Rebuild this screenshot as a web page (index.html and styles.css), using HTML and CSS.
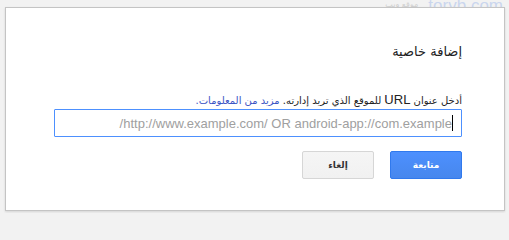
FILE: index.html
```html
<!DOCTYPE html>
<html lang="ar" dir="rtl">
<head>
<meta charset="utf-8">
<link rel="stylesheet" href="styles.css">
</head>
<body>
<div class="page">
  <div class="page-head">
    <span class="site-url">torvb.com</span>
    <span class="site-label">موقع ويب</span>
  </div>
</div>
<div class="dialog">
  <h1 class="title">إضافة خاصية</h1>
  <p class="desc">أدخل عنوان <span class="latin">URL</span> للموقع الذي تريد إدارته. <a class="link" href="#">مزيد من المعلومات.</a></p>
  <div class="field">
    <input class="url-input" type="text" placeholder="http://www.example.com/ OR android-app://com.example/">
    <span class="caret"></span>
  </div>
  <div class="actions">
    <button class="btn btn-primary">متابعة</button>
    <button class="btn btn-secondary">إلغاء</button>
  </div>
</div>
</body>
</html>
```
FILE: styles.css
```css
html, body {
  margin: 0;
  padding: 0;
}
body {
  width: 509px;
  height: 213px;
  overflow: hidden;
  position: relative;
  background: #f2f2f2;
  font-family: "DejaVu Sans", sans-serif;
}
.page {
  height: 213px;
}
.page-head {
  display: flex;
  align-items: flex-start;
  gap: 10px;
  padding-right: 6px;
  margin-top: -4px;
}
.site-url {
  font-family: Arial, "Liberation Sans", sans-serif;
  font-size: 17px;
  color: #cad6ee;
  direction: ltr;
}
.site-label {
  font-size: 8px;
  color: #cfcfcf;
  margin-top: 4px;
}
.dialog {
  position: absolute;
  left: 5px;
  top: 7px;
  height: 202px;
  background: #fff;
  border: 1px solid #c4c4c4;
  box-shadow: 0 1px 2px rgba(0,0,0,0.12);
  padding: 0 42px 0 48px;
  box-sizing: content-box;
  width: 408px;
  display: flex;
  flex-direction: column;
}
.title {
  margin: 34px 0 0;
  font-size: 13px;
  font-weight: normal;
  line-height: 20px;
  color: #222;
}
.desc {
  margin: 30px 0 0;
  font-size: 10px;
  line-height: 16px;
  color: #222;
}
.latin {
  font-family: Arial, "Liberation Sans", sans-serif;
  font-size: 13px;
}
.link {
  color: #3b54c4;
  text-decoration: none;
}
.field {
  position: relative;
  margin-top: 0;
}
.url-input {
  display: block;
  box-sizing: border-box;
  width: 408px;
  height: 28px;
  margin: 0;
  border: 1px solid #4d90fe;
  border-radius: 1px;
  padding: 0 9px 0 8px;
  font-family: Arial, "Liberation Sans", sans-serif;
  font-size: 13px;
  color: #222;
  outline: none;
  background: #fff;
}
.url-input::placeholder {
  color: #a0a0a0;
}
.caret {
  position: absolute;
  right: 9px;
  top: 6px;
  width: 1px;
  height: 16px;
  background: #000;
}
.actions {
  display: flex;
  gap: 16px;
  margin-top: 14px;
}
.btn {
  width: 72px;
  height: 28px;
  box-sizing: border-box;
  border-radius: 2px;
  font-family: "DejaVu Sans", sans-serif;
  font-size: 9px;
  font-weight: bold;
  padding: 0;
}
.btn-primary {
  background: #4d8ff5;
  background-image: linear-gradient(#4d90fe, #4787ed);
  border: 1px solid #3079ed;
  color: #fff;
}
.btn-secondary {
  background: #f3f3f3;
  background-image: linear-gradient(#f5f5f5, #f1f1f1);
  border: 1px solid #d6d6d6;
  color: #333;
}
```
